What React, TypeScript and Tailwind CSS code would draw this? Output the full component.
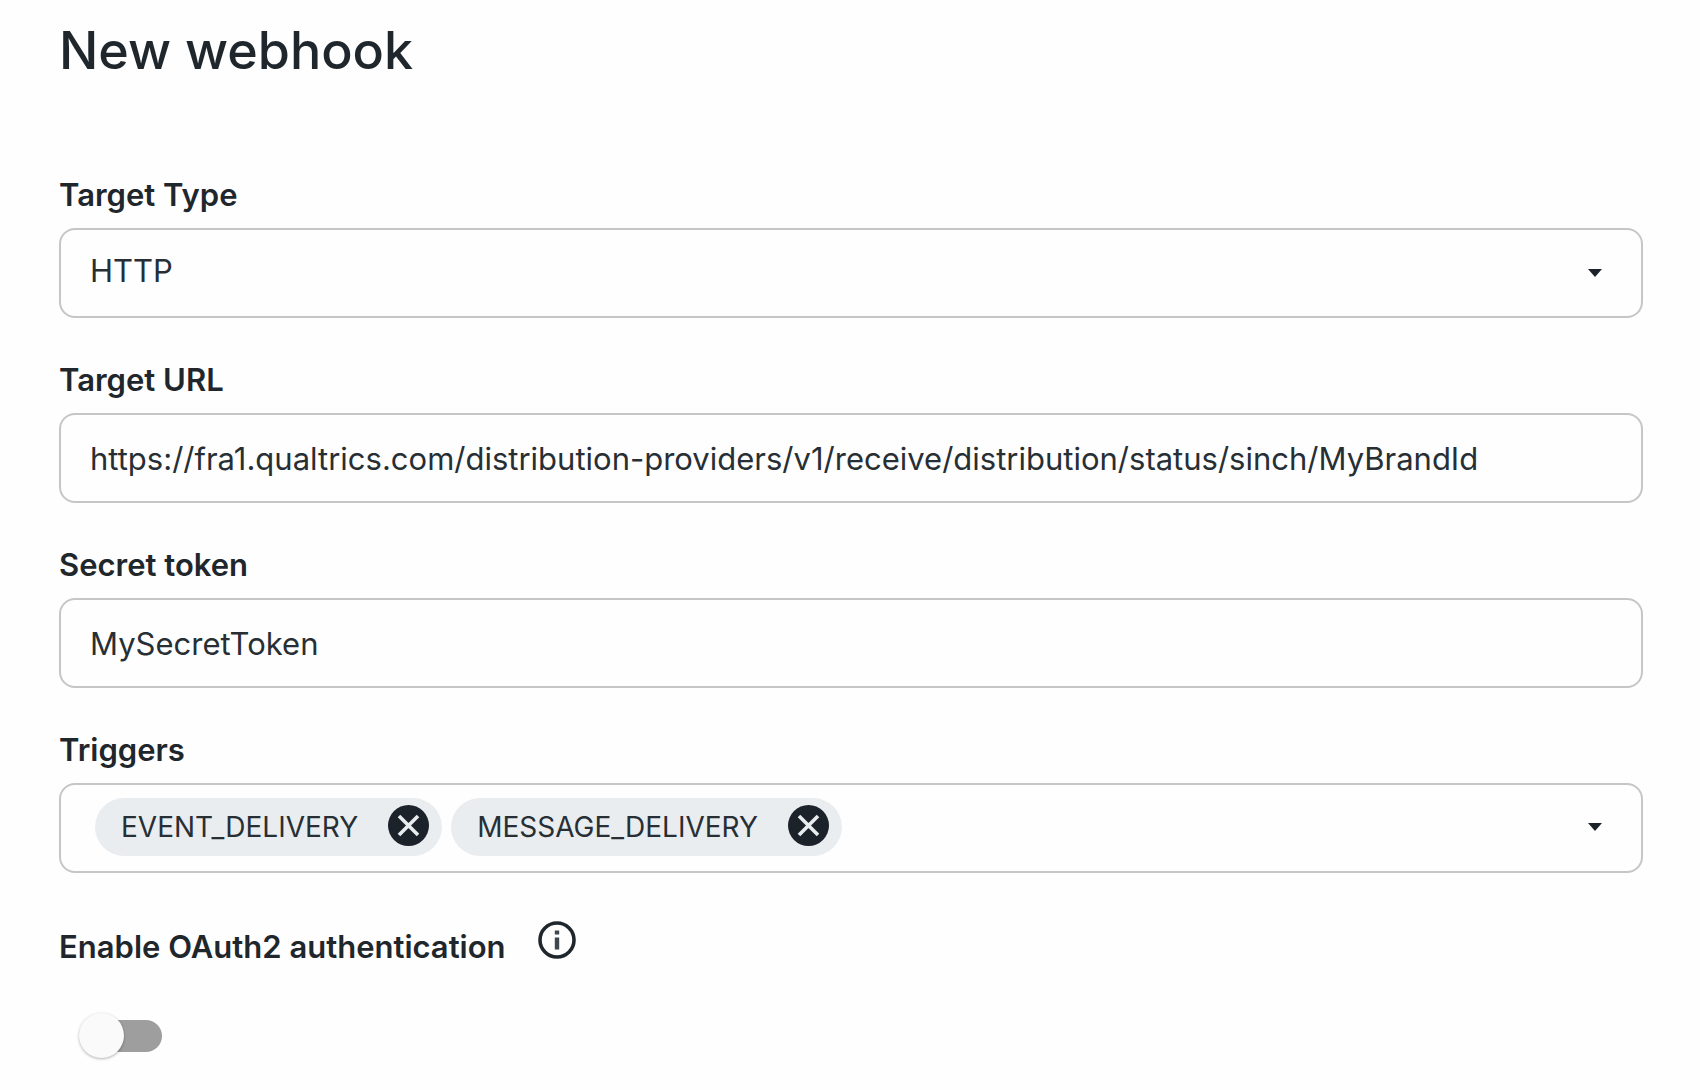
import { useState } from "react";
import type { ReactNode } from "react";

const CONTROL =
  "h-[90px] w-full rounded-2xl border-2 border-[#c6c6c6] bg-[#fefefe] text-[31px] text-[#272f35] outline-none focus:border-[#8a9096]";

function Field({ id, label, children }: { id: string; label: string; children: ReactNode }) {
  return (
    <div className="flex flex-col gap-[17px]">
      <label htmlFor={id} className="text-[31px] leading-8 font-semibold">
        {label}
      </label>
      {children}
    </div>
  );
}

function Caret() {
  return (
    <svg viewBox="0 0 14 8" className="h-2 w-3.5" aria-hidden="true">
      <path d="M0 0h14L7 8z" fill="#1b2229" />
    </svg>
  );
}

function Chip({ name, onRemove }: { name: string; onRemove: () => void }) {
  return (
    <li className="flex h-[58px] items-center gap-[30px] rounded-full bg-[#e9edf0] pr-[13px] pl-[26px] text-[28px]">
      <span>{name}</span>
      <button type="button" aria-label={`Remove ${name}`} onClick={onRemove} className="mb-1">
        <svg viewBox="0 0 41 41" className="size-[41px]" aria-hidden="true">
          <circle cx="20.5" cy="20.5" r="20.5" fill="#1b2229" />
          <path d="M11 11l19 19M30 11L11 30" stroke="#e9edf0" strokeWidth="3.6" fill="none" />
        </svg>
      </button>
    </li>
  );
}

export default function App() {
  const [triggers, setTriggers] = useState(["EVENT_DELIVERY", "MESSAGE_DELIVERY"]);
  const [oauth, setOauth] = useState(false);

  return (
    <main className="min-h-screen bg-[#fefefe] pt-[17px] pr-[57px] pb-4 pl-[59px] font-['Inter',sans-serif] text-[#1f272d]">
      <h1 className="text-[52px] leading-[68px] font-medium">New webhook</h1>

      <form className="mt-[94px] flex flex-col gap-[46px]">
        <Field id="target-type" label="Target Type">
          <div className="relative">
            <select id="target-type" className={`${CONTROL} appearance-none px-[29px] pb-1`}>
              <option>HTTP</option>
            </select>
            <span className="pointer-events-none absolute inset-y-0 right-[41px] flex items-center">
              <Caret />
            </span>
          </div>
        </Field>

        <Field id="target-url" label="Target URL">
          <input
            id="target-url"
            type="text"
            defaultValue="https://fra1.qualtrics.com/distribution-providers/v1/receive/distribution/status/sinch/MyBrandId"
            className={`${CONTROL} px-[29px]`}
          />
        </Field>

        <Field id="secret-token" label="Secret token">
          <input id="secret-token" type="text" defaultValue="MySecretToken" className={`${CONTROL} px-[29px]`} />
        </Field>

        <Field id="triggers" label="Triggers">
          <div className={`${CONTROL} flex items-center justify-between pr-[29px] pb-0.5 pl-[34px]`}>
            <ul className="flex gap-[9px]">
              {triggers.map((name) => (
                <Chip key={name} name={name} onRemove={() => setTriggers(triggers.filter((t) => t !== name))} />
              ))}
            </ul>
            <button id="triggers" type="button" aria-label="Show triggers" className="p-2.5">
              <Caret />
            </button>
          </div>
        </Field>

        <div>
          <div className="flex items-start gap-8">
            <label htmlFor="oauth" className="pt-3 text-[31px] leading-8 font-semibold">
              Enable OAuth2 authentication
            </label>
            <button type="button" aria-label="About OAuth2 authentication" className="pt-0.5">
              <svg viewBox="0 0 38 38" className="size-[38px]" aria-hidden="true">
                <circle cx="19" cy="19" r="17" fill="none" stroke="#1f272d" strokeWidth="3.6" />
                <path d="M19 9.500v4M19 16.500v12" stroke="#3f474d" strokeWidth="4.400" />
              </svg>
            </button>
          </div>
          <input
            id="oauth"
            type="checkbox"
            role="switch"
            checked={oauth}
            onChange={(e) => setOauth(e.target.checked)}
            className="relative mt-[57px] ml-[25px] block h-8 w-[78px] appearance-none rounded-full bg-[#9e9e9e] before:absolute before:-top-[7px] before:-left-[5px] before:size-[45px] before:rounded-full before:bg-[#fafafa] before:shadow-[0_1px_3px_rgba(0,0,0,0.3)] checked:bg-[#4a7fd6] checked:before:left-[38px]"
          />
        </div>
      </form>
    </main>
  );
}
